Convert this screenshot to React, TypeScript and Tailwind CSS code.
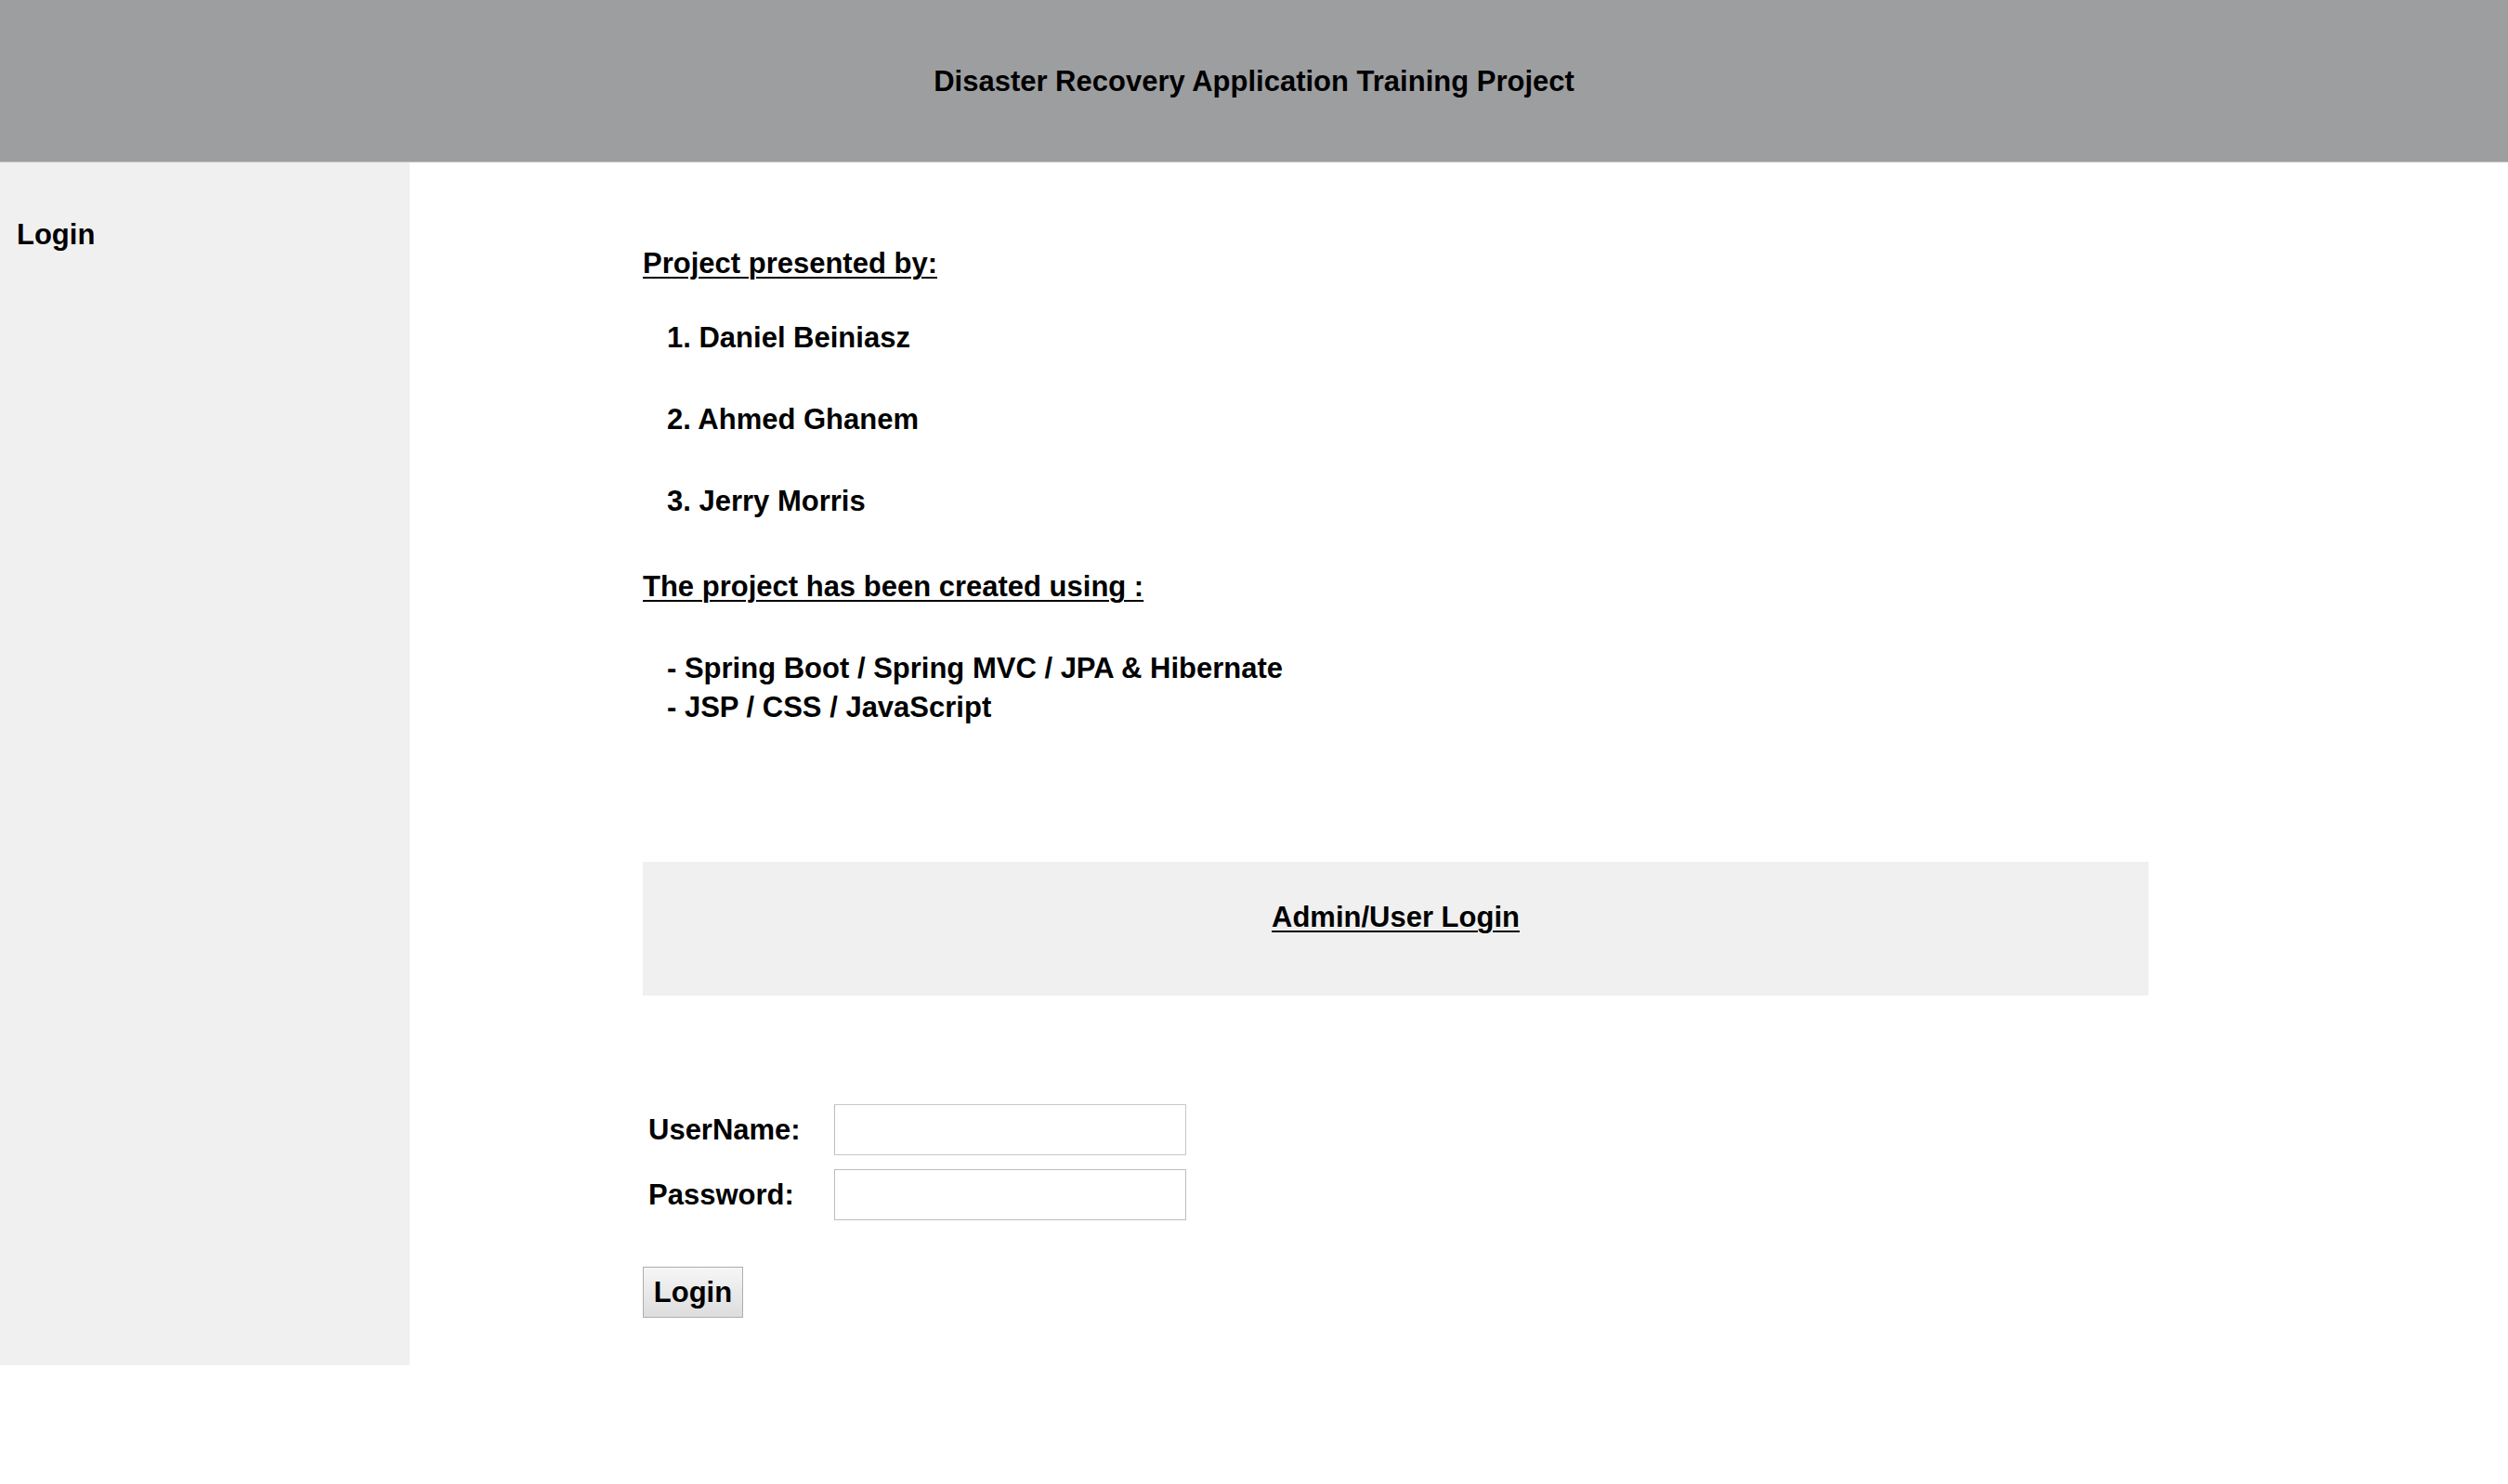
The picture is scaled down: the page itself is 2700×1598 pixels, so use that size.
export default function App() {
  const font = { fontFamily: '"Liberation Sans", Arial, sans-serif' };

  return (
    <div className="min-h-screen bg-white text-black font-bold" style={font}>
      {/* Header */}
      <header className="h-[175px] bg-[#9d9ea0] border-b border-[#c9cacb] flex items-center justify-center">
        <h1 className="text-[31px] leading-none font-bold">Disaster Recovery Application Training Project</h1>
      </header>

      <div className="flex">
        {/* Sidebar */}
        <aside className="w-[441px] shrink-0 bg-[#f0f0f0] pt-[62px] pl-[18px]">
          <div className="text-[31px] leading-none">Login</div>
        </aside>

        {/* Main */}
        <main className="flex-1 pl-[251px] pt-[93px] pb-[51px]">
          <h2 className="text-[31px] leading-none underline underline-offset-[4px] decoration-[2px]">Project presented by:</h2>
          <ol className="pl-[26px] mt-[49px] flex flex-col gap-[57px] text-[31px] leading-none">
            <li>1. Daniel Beiniasz</li>
            <li>2. Ahmed Ghanem</li>
            <li>3. Jerry Morris</li>
          </ol>

          <h2 className="mt-[61px] text-[31px] leading-none underline underline-offset-[4px] decoration-[2px]">
            The project has been created using :
          </h2>
          <div className="pl-[26px] mt-[57px] flex flex-col gap-[11px] text-[31px] leading-none">
            <div>- Spring Boot / Spring MVC / JPA &amp; Hibernate</div>
            <div>- JSP / CSS / JavaScript</div>
          </div>

          <section className="mt-[151px] w-[1621px] h-[144px] bg-[#f0f0f0] flex justify-center pt-[44px]">
            <h3 className="text-[31px] leading-none underline underline-offset-[4px] decoration-[2px]">Admin/User Login</h3>
          </section>

          <form className="mt-[117px]" onSubmit={(e) => e.preventDefault()}>
            <div className="flex flex-col gap-[15px]">
              <div className="flex items-center">
                <label className="w-[206px] pl-[6px] text-[31px] leading-none">UserName:</label>
                <input
                  type="text"
                  className="w-[379px] h-[55px] bg-white border border-[#c8c8c8] border-l-[#bdbdbd] outline-none px-2 text-[24px]"
                />
              </div>
              <div className="flex items-center">
                <label className="w-[206px] pl-[6px] text-[31px] leading-none">Password:</label>
                <input
                  type="password"
                  className="w-[379px] h-[55px] bg-white border border-[#bdbdbd] outline-none px-2 text-[24px]"
                />
              </div>
            </div>
            <button
              type="submit"
              className="mt-[50px] w-[108px] h-[55px] border border-[#adadad] bg-gradient-to-b from-[#f6f6f6] to-[#dddddd] text-[31px] leading-none font-bold flex items-center justify-center"
            >
              Login
            </button>
          </form>
        </main>
      </div>
    </div>
  );
}
